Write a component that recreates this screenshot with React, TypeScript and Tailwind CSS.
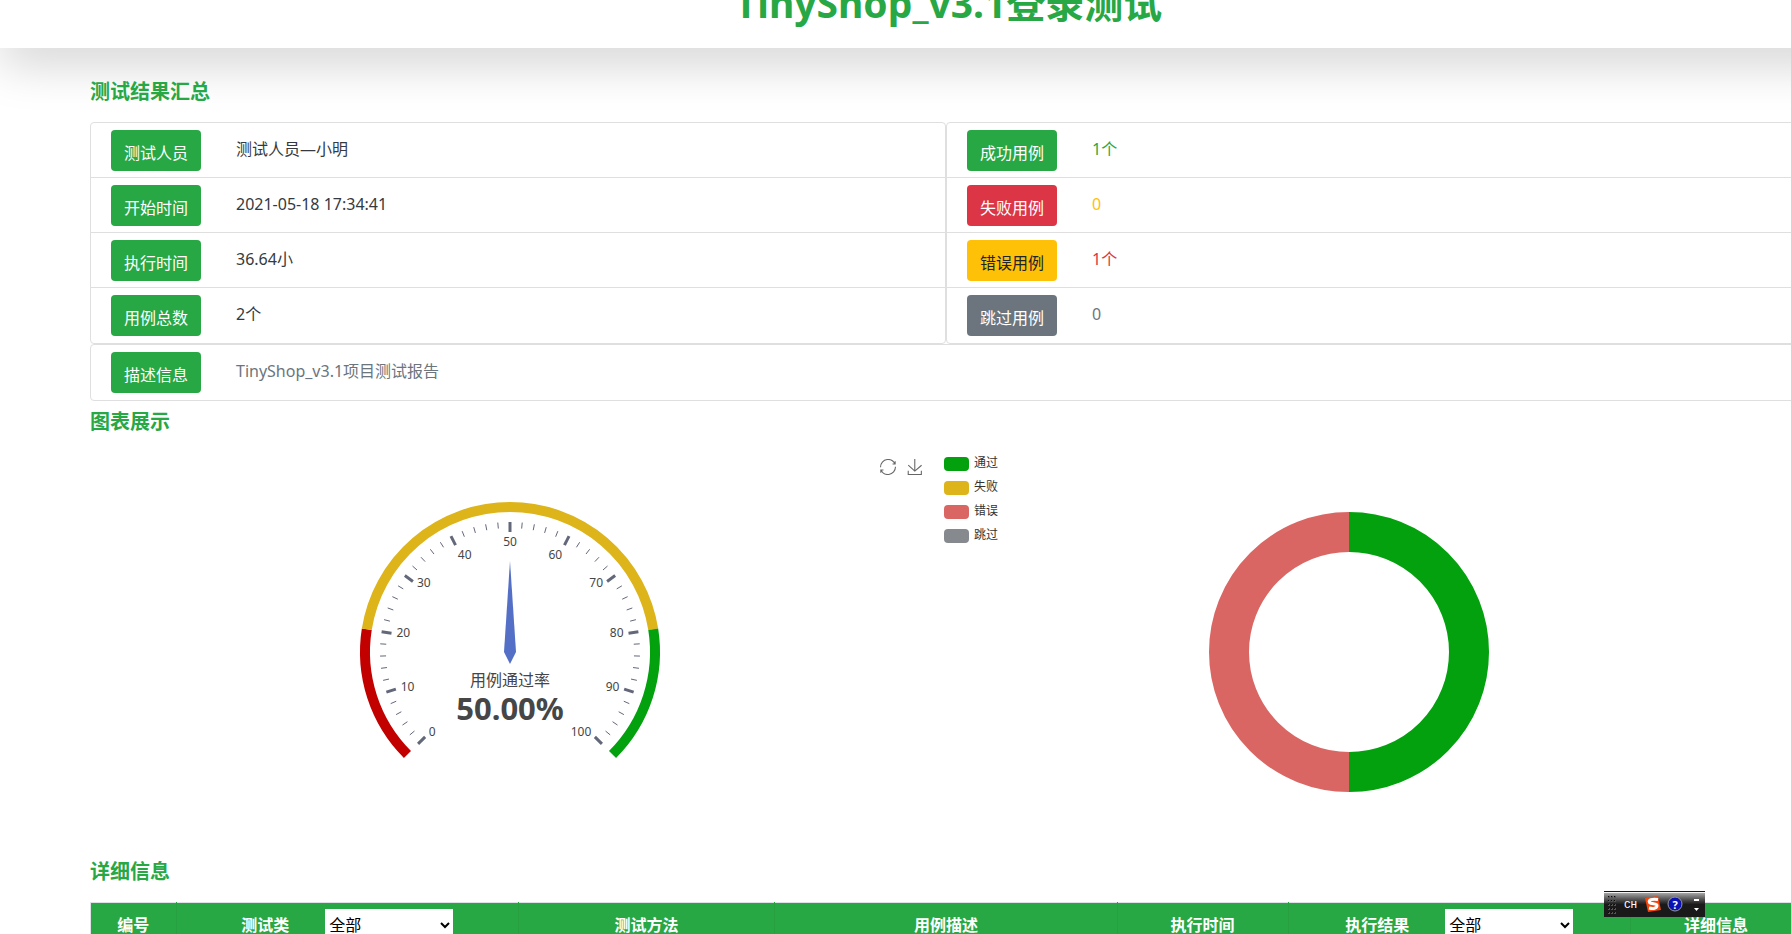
import { useState } from "react"

type Item = { label: string; value: string; btn: string; text: string }

const GREEN_BTN = "bg-[#28a745] text-white"

const leftItems: Item[] = [
    { label: "测试人员", value: "测试人员—小明", btn: GREEN_BTN, text: "text-[#343a40]" },
    { label: "开始时间", value: "2021-05-18 17:34:41", btn: GREEN_BTN, text: "text-[#343a40]" },
    { label: "执行时间", value: "36.64小", btn: GREEN_BTN, text: "text-[#343a40]" },
    { label: "用例总数", value: "2个", btn: GREEN_BTN, text: "text-[#343a40]" },
]

const rightItems: Item[] = [
    { label: "成功用例", value: "1个", btn: GREEN_BTN, text: "text-[#28a745]" },
    { label: "失败用例", value: "0", btn: "bg-[#dc3545] text-white", text: "text-[#ffc107]" },
    { label: "错误用例", value: "1个", btn: "bg-[#ffc107] text-[#212529]", text: "text-[#dc3545]" },
    { label: "跳过用例", value: "0", btn: "bg-[#6c757d] text-white", text: "text-[#6c757d]" },
]

const descItems: Item[] = [
    { label: "描述信息", value: "TinyShop_v3.1项目测试报告", btn: GREEN_BTN, text: "text-[#6c757d]" },
]

const legend = [
    { name: "通过", color: "bg-[#02a10d]" },
    { name: "失败", color: "bg-[#ddb41a]" },
    { name: "错误", color: "bg-[#da6664]" },
    { name: "跳过", color: "bg-[#868a8e]" },
]

function ItemList({ items }: { items: Item[] }) {
    return (
        <ul className="flex-1 rounded-[4px] border border-[#dfdfdf] bg-white pb-px divide-y divide-[#dfdfdf]">
            {items.map((item) => (
                <li key={item.label} className="flex items-start gap-[35px] px-5 pt-[7px] pb-[6px]">
                    <button className={`h-[41px] w-[90px] rounded-[4px] pt-1 ${item.btn}`}>{item.label}</button>
                    <span className={`pt-[7px] leading-6 ${item.text}`}>{item.value}</span>
                </li>
            ))}
        </ul>
    )
}

function SectionTitle({ children }: { children: string }) {
    return <h2 className="mb-[18px] text-[20px] leading-6 font-bold text-[#28a745]">{children}</h2>
}

// point on the dial: 0 sits at 225deg, 100 at -45deg
function dial(value: number, r: number) {
    const a = ((225 - value * 2.7) * Math.PI) / 180
    return { x: Math.cos(a) * r, y: -Math.sin(a) * r }
}

function arc(from: number, to: number) {
    const a = dial(from, 145)
    const b = dial(to, 145)
    return `M${a.x} ${a.y} A145 145 0 ${(to - from) * 2.7 > 180 ? 1 : 0} 1 ${b.x} ${b.y}`
}

function Gauge() {
    const ticks = Array.from({ length: 51 }, (_, i) => i * 2)
    const labels = Array.from({ length: 11 }, (_, i) => i * 10)
    return (
        <svg width="400" height="400" viewBox="-200 -200 400 400" role="img" aria-label="用例通过率">
            <g fill="none" strokeWidth="10">
                <path d={arc(0, 20)} stroke="#c20000" />
                <path d={arc(20, 80)} stroke="#ddb41a" />
                <path d={arc(80, 100)} stroke="#02a10d" />
            </g>
            {ticks.map((v) => {
                const major = v % 10 === 0
                const a = dial(v, 130)
                const b = dial(v, major ? 120 : 124)
                return <line key={v} x1={a.x} y1={a.y} x2={b.x} y2={b.y} stroke="#63677a" strokeWidth={major ? 3 : 1} />
            })}
            {labels.map((v) => {
                const p = dial(v, 115)
                const anchor = p.x < -46 ? "start" : p.x > 46 ? "end" : "middle"
                const dy = p.y < -92 ? 9 : 3
                return <text key={v} x={p.x} y={p.y + dy} textAnchor={anchor} fontSize="12" fill="#464646">{v}</text>
            })}
            <polygon points="0,-91 6,0 0,12 -6,0" fill="#5470c6" />
            <text x="0" y="34" textAnchor="middle" fontSize="16" fill="#464646">用例通过率</text>
            <text x="0" y="68" textAnchor="middle" fontSize="31" fontWeight="700" fill="#464646">50.00%</text>
        </svg>
    )
}

function Donut() {
    return (
        <svg width="400" height="400" viewBox="-200 -200 400 400" role="img" aria-label="用例结果">
            <path d="M0 -120 A120 120 0 0 1 0 120" fill="none" stroke="#02a10d" strokeWidth="40" />
            <path d="M0 120 A120 120 0 0 1 0 -120" fill="none" stroke="#da6664" strokeWidth="40" />
        </svg>
    )
}

function Toolbox() {
    return (
        <div className="absolute top-[7px] right-[6px] flex gap-[11px]">
            <button aria-label="还原">
                <svg width="16" height="16" viewBox="0 0 60 60" fill="none" stroke="#666" strokeWidth="4">
                    <path d="M47,18.9h9.8V8.7 M56.3,20.1 C52.1,9,40.5,0.6,26.8,2.1C12.6,3.7,1.6,16.2,2.1,30.6 M13,41.1H3.1v10.2 M3.7,39.9c4.2,11.1,15.8,19.5,29.5,18 c14.2-1.6,25.2-14.1,24.7-28.5" />
                </svg>
            </button>
            <button aria-label="保存为图片">
                <svg width="16" height="16" viewBox="0 0 60 60" fill="none" stroke="#666" strokeWidth="4">
                    <path d="M4.7,22.9L29.3,45.5L54.7,23.4M4.6,43.6L4.6,58L53.8,58L53.8,43.6M29.2,45.1L29.2,0" />
                </svg>
            </button>
        </div>
    )
}

function FilterHead({ id, label, options }: { id: string; label: string; options: string[] }) {
    const [value, setValue] = useState("全部")
    return (
        <div className="flex items-center justify-center gap-9">
            <label htmlFor={id}>{label}</label>
            <select
                id={id}
                value={value}
                onChange={(e) => setValue(e.target.value)}
                className="h-8 w-32 bg-white font-normal text-black"
            >
                {options.map((o) => <option key={o}>{o}</option>)}
            </select>
        </div>
    )
}

function LanguageBar() {
    return (
        <div className="fixed right-[86px] bottom-[17px] flex h-[26px] w-[101px] items-center border-t border-[#161616] bg-linear-to-b from-[#b4b4b4] via-[#1a1a1a] via-50% to-[#1a1a1a] text-white">
            <svg width="101" height="25" viewBox="0 0 101 25" className="absolute inset-0">
                <rect width="101" height="1" fill="#f4f4f4" />
                {[4, 8, 12, 16, 20].map((y) => (
                    <g key={y} fill="#555">
                        <rect x="4" y={y} width="2" height="2" />
                        <rect x="7" y={y} width="2" height="2" />
                        <rect x="10" y={y} width="2" height="2" />
                    </g>
                ))}
                {[4, 8, 12, 16, 20].map((y) => (
                    <g key={y} fill="#0a0a0a">
                        <rect x="4" y={y} width="1" height="1" />
                        <rect x="7" y={y} width="1" height="1" />
                        <rect x="10" y={y} width="1" height="1" />
                    </g>
                ))}
                <polygon points="41,6 54,4 57,18 44,20" fill="#f4460d" />
                <path d="M54 7.5 C48 6.5 44 8 45.5 10.5 C47 12.5 53 11 53 13.5 C53 16.5 49 17 45 16" fill="none" stroke="#fff" strokeWidth="3" />
                <circle cx="71" cy="12" r="7" fill="#0a12b4" stroke="#9a9a9a" strokeWidth="1" />
                <rect x="90" y="7" width="5" height="2" fill="#fff" />
                <polygon points="90,16 95,16 92.5,19" fill="#fff" />
            </svg>
            <span className="relative ml-5 w-4 font-['Liberation_Mono','Noto_Sans_CJK_SC',monospace] text-[11px] leading-4">CH</span>
            <span className="relative ml-[31px] w-2 text-center text-[11px] leading-4 font-bold">?</span>
        </div>
    )
}

export default function App() {
    return (
        <div className="h-screen overflow-hidden bg-white font-['Noto_Sans','Noto_Sans_CJK_SC',sans-serif] text-base text-[#212529]">
            <div className="w-[calc(100%+106px)]">
                <header className="h-12 overflow-hidden bg-white shadow-[0_16px_48px_rgba(0,0,0,0.175)]">
                    <h1 className="-mt-[21px] text-center text-[39px] leading-12 font-bold text-[#28a745]">TinyShop_v3.1登录测试</h1>
                </header>

                <main className="mr-[95px] ml-[90px] pt-8">
                    <SectionTitle>测试结果汇总</SectionTitle>
                    <section>
                        <div className="flex">
                            <ItemList items={leftItems} />
                            <ItemList items={rightItems} />
                        </div>
                        <div className="flex">
                            <ItemList items={descItems} />
                        </div>
                    </section>

                    <section className="pt-[9px]">
                        <SectionTitle>图表展示</SectionTitle>
                        <div className="mr-[34px] grid grid-cols-2">
                            <div className="relative flex justify-center">
                                <Gauge />
                                <Toolbox />
                            </div>
                            <div className="relative flex justify-center">
                                <Donut />
                                <ul className="absolute top-[5px] left-[15px] flex flex-col gap-[10px]">
                                    {legend.map((l) => (
                                        <li key={l.name} className="flex h-[14px] gap-[5px]">
                                            <span className={`h-[14px] w-[25px] rounded-[4px] ${l.color}`}></span>
                                            <span className="text-xs leading-3 text-[#333]">{l.name}</span>
                                        </li>
                                    ))}
                                </ul>
                            </div>
                        </div>
                    </section>

                    <section className="pt-2">
                        <SectionTitle>详细信息</SectionTitle>
                        <table className="w-full table-fixed border-collapse border border-[#dee2e6]">
                            <thead>
                                <tr className="h-[44px] bg-[#28a745] text-white [&>th+th]:border-l [&>th+th]:border-[#27a042]">
                                    <th className="w-[5%]">编号</th>
                                    <th className="w-[20%]">
                                        <FilterHead id="case-class" label="测试类" options={["全部"]} />
                                    </th>
                                    <th className="w-[15%]">测试方法</th>
                                    <th className="w-[20%]">用例描述</th>
                                    <th className="w-[10%]">执行时间</th>
                                    <th className="w-[20%]">
                                        <FilterHead id="case-result" label="执行结果" options={["全部", "成功", "失败", "错误", "跳过"]} />
                                    </th>
                                    <th className="w-[10%]">详细信息</th>
                                </tr>
                            </thead>
                        </table>
                    </section>
                </main>
            </div>
            <LanguageBar />
        </div>
    )
}
